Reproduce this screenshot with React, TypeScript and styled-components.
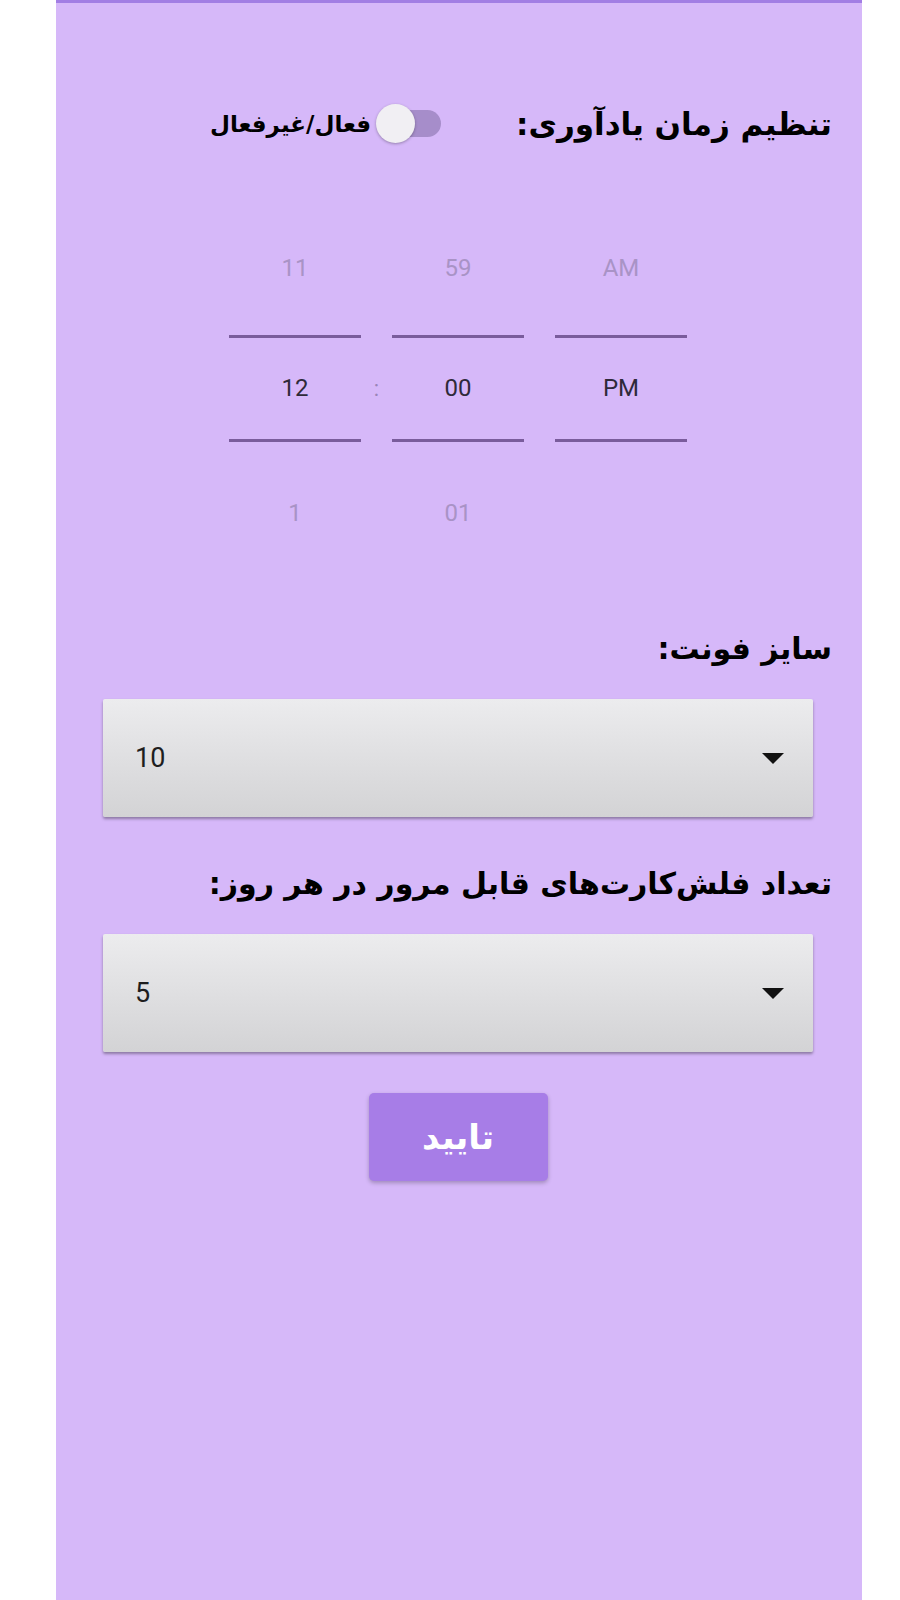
import styled, { createGlobalStyle } from "styled-components";

const GlobalStyle = createGlobalStyle`
  body {
    margin: 0;
    background: #ffffff;
  }
`;

const persian = `"DejaVu Sans", "Noto Sans", sans-serif`;
const latin = `Roboto, "Liberation Sans", sans-serif`;

const hours = ["11", "12", "1"];
const minutes = ["59", "00", "01"];
const periods = ["AM", "PM", ""];

export default function App() {
  return (
    <>
      <GlobalStyle />
      <Page>
        <Panel>
          <Header>
            <Title>تنظیم زمان یادآوری:</Title>
            <ToggleGroup>
              <Track>
                <Thumb />
              </Track>
              <ToggleLabel>فعال/غیرفعال</ToggleLabel>
            </ToggleGroup>
          </Header>

          <Picker>
            <PickerColumn values={hours} />
            <Colon>:</Colon>
            <PickerColumn values={minutes} />
            <Spacer />
            <PickerColumn values={periods} />
          </Picker>

          <Label $top={82}>سایز فونت:</Label>
          <Select>
            <SelectValue>10</SelectValue>
            <Arrow />
          </Select>

          <Label $top={43}>تعداد فلش‌کارت‌های قابل مرور در هر روز:</Label>
          <Select>
            <SelectValue>5</SelectValue>
            <Arrow />
          </Select>

          <ButtonRow>
            <Confirm>تایید</Confirm>
          </ButtonRow>
        </Panel>
      </Page>
    </>
  );
}

const PickerColumn = ({ values }: { values: string[] }) => (
  <Column>
    <Faded>{values[0]}</Faded>
    <Selected>{values[1]}</Selected>
    <Faded $below>{values[2]}</Faded>
  </Column>
);

const Page = styled.div`
  width: 900px;
  min-height: 1600px;
  display: flex;
`;

const Panel = styled.div`
  width: 806px;
  min-height: 1597px;
  margin-left: 56px;
  background: #d6b8f9;
  border-top: 3px solid #a27ee4;
  direction: rtl;
  padding-top: 97px;
  box-sizing: border-box;
`;

const Header = styled.div`
  display: flex;
  align-items: center;
  gap: 75px;
  height: 47px;
  padding: 0 30px;
`;

const Title = styled.h1`
  margin: 0;
  font-family: ${persian};
  font-size: 31px;
  font-weight: 700;
  color: #000000;
`;

const ToggleGroup = styled.div`
  display: flex;
  align-items: center;
  gap: 8px;
`;

const Track = styled.div`
  position: relative;
  width: 62px;
  height: 27px;
  border-radius: 14px;
  background: #a68dca;
`;

const Thumb = styled.div`
  position: absolute;
  left: -3px;
  top: -6px;
  width: 39px;
  height: 39px;
  border-radius: 50%;
  background: #f1eff3;
  box-shadow: 0 1px 3px rgba(0, 0, 0, 0.3);
`;

const ToggleLabel = styled.span`
  font-family: ${persian};
  font-size: 23px;
  font-weight: 700;
  color: #000000;
`;

const Picker = styled.div`
  direction: ltr;
  display: flex;
  justify-content: center;
  margin-top: 91px;
  margin-left: -2px;
`;

const Column = styled.div`
  width: 132px;
  display: flex;
  flex-direction: column;
  font-family: ${latin};
  font-size: 24px;
  text-align: center;
`;

const Faded = styled.div<{ $below?: boolean }>`
  height: 60px;
  line-height: 60px;
  color: #a993c6;
  margin-top: ${(p) => (p.$below ? "41px" : "0")};
  margin-bottom: ${(p) => (p.$below ? "0" : "37px")};
`;

const Selected = styled.div`
  height: 101px;
  line-height: 101px;
  color: #2f2a3a;
  border-top: 3px solid #7a5c9c;
  border-bottom: 3px solid #7a5c9c;
`;

const Colon = styled.div`
  width: 31px;
  text-align: center;
  font-family: ${latin};
  font-size: 22px;
  color: #9a84b8;
  padding-top: 132px;
  line-height: 38px;
`;

const Spacer = styled.div`
  width: 31px;
`;

const Label = styled.h2<{ $top: number }>`
  margin: ${(p) => p.$top}px 0 0;
  padding: 0 30px;
  height: 47px;
  line-height: 47px;
  font-family: ${persian};
  font-size: 30px;
  font-weight: 700;
  color: #000000;
`;

const Select = styled.div`
  direction: ltr;
  display: flex;
  align-items: center;
  justify-content: space-between;
  height: 118px;
  margin: 27px 49px 0 47px;
  padding: 0 29px 0 32px;
  box-sizing: border-box;
  background: linear-gradient(180deg, #ececee 0%, #dedee0 55%, #d3d3d5 100%);
  border-radius: 2px;
  box-shadow: 0 2px 3px rgba(0, 0, 0, 0.35);
`;

const SelectValue = styled.span`
  font-family: ${latin};
  font-size: 27px;
  color: #1e1e1e;
`;

const Arrow = styled.span`
  width: 0;
  height: 0;
  border-left: 11px solid transparent;
  border-right: 11px solid transparent;
  border-top: 11px solid #111111;
`;

const ButtonRow = styled.div`
  display: flex;
  justify-content: center;
  margin-top: 41px;
  margin-left: -2px;
`;

const Confirm = styled.button`
  width: 179px;
  height: 88px;
  border: 0;
  border-radius: 5px;
  background: #a77de7;
  box-shadow: 0 2px 4px rgba(0, 0, 0, 0.25);
  color: #ffffff;
  font-family: ${persian};
  font-size: 34px;
  font-weight: 700;
  cursor: pointer;
`;
